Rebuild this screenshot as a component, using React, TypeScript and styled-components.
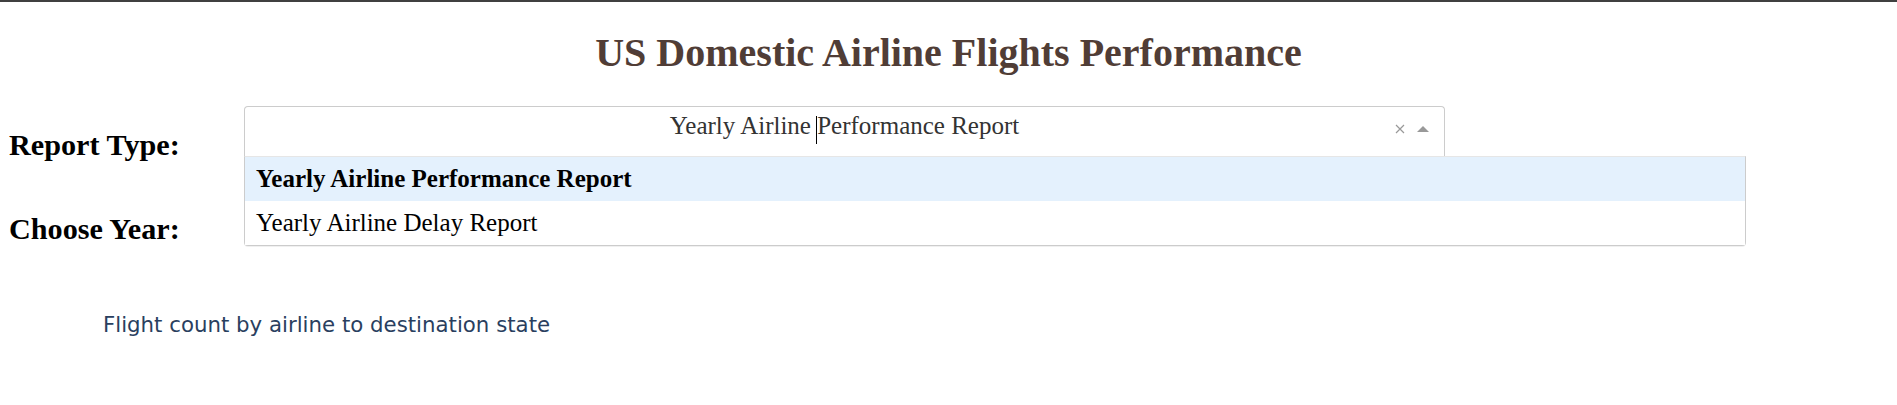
import styled, { createGlobalStyle } from "styled-components";

const GlobalStyle = createGlobalStyle`
    html {
        border-top: 2px solid #404040;
        background: #ffffff;
    }
    body {
        margin: 8px;
        font-family: "Liberation Serif", "Times New Roman", serif;
        color: #000000;
    }
`;

const Page = styled.div`
    display: flex;
    flex-direction: column;
`;

const Title = styled.h1`
    margin: 19px 0 26px;
    text-align: center;
    color: #503d36;
    font-size: 40px;
    line-height: 48px;
    font-weight: 700;
`;

const Row = styled.div`
    display: flex;
    align-items: flex-start;
`;

const Label = styled.h2`
    flex: 0 0 175px;
    margin: 24px 58px 24px 1px;
    font-size: 30.2px;
    line-height: 36px;
    font-weight: 700;
`;

const DropdownWrap = styled.div<{ $raised?: boolean }>`
    position: relative;
    width: 1201px;
    padding: 3px 3px 3px 2px;
    z-index: ${(p) => (p.$raised ? 2 : 1)};
`;

const Control = styled.div`
    position: relative;
    display: flex;
    height: 51px;
    box-sizing: border-box;
    border: 1px solid #cccccc;
    border-radius: 4px 4px 0 0;
    border-bottom-color: #e6e6e6;
    background: #ffffff;
    font-size: 25px;
`;

const ValueArea = styled.div`
    flex: 1;
    padding-left: 52px;
    line-height: 38px;
    text-align: center;
    color: #333333;
    white-space: nowrap;
`;

const Cursor = styled.span`
    position: absolute;
    left: 571px;
    top: 9px;
    width: 1px;
    height: 28px;
    background: #000000;
`;

const Indicators = styled.div`
    flex: 0 0 52px;
    box-sizing: border-box;
    display: flex;
    align-items: center;
    height: 43px;
    padding-left: 3px;
    gap: 12px;
`;

const Clear = styled.span`
    display: flex;
    color: #999999;
`;

const Arrow = styled.span`
    width: 0;
    height: 0;
    border-style: solid;
    border-width: 0 6px 6px;
    border-color: transparent transparent #999999;
`;

const Menu = styled.div`
    position: absolute;
    left: 2px;
    top: 53px;
    width: 1502px;
    box-sizing: border-box;
    border: 1px solid #cccccc;
    border-top-color: #e6e6e6;
    border-radius: 0 0 4px 4px;
    background: #ffffff;
    box-shadow: 0 1px 0 rgba(0, 0, 0, 0.06);
    font-size: 25px;
`;

const Option = styled.div<{ $focused?: boolean; $selected?: boolean }>`
    height: 44px;
    line-height: 44px;
    padding: 0 11px;
    color: #000000;
    background: ${(p) => (p.$focused ? "#e4f1fd" : "#ffffff")};
    font-weight: ${(p) => (p.$selected ? 700 : 400)};
    white-space: nowrap;
`;

const GraphTitle = styled.div`
    margin: 40px 0 0 95px;
    font-family: "DejaVu Sans", Verdana, sans-serif;
    font-size: 21.3px;
    line-height: 28px;
    color: #2a3f5f;
`;

const ClearIcon = () => (
    <svg width="10" height="10" viewBox="0 0 10 10">
        <path d="M1 1L9 9M9 1L1 9" stroke="currentColor" strokeWidth="1.2" />
    </svg>
);

const reportOptions = [
    "Yearly Airline Performance Report",
    "Yearly Airline Delay Report",
];

const App = () => {
    return (
        <Page>
            <GlobalStyle />
            <Title>US Domestic Airline Flights Performance</Title>
            <Row>
                <Label>Report Type:</Label>
                <DropdownWrap $raised>
                    <Control>
                        <ValueArea>Yearly Airline Performance Report</ValueArea>
                        <Cursor />
                        <Indicators>
                            <Clear>
                                <ClearIcon />
                            </Clear>
                            <Arrow />
                        </Indicators>
                    </Control>
                    <Menu>
                        {reportOptions.map((o, i) => (
                            <Option key={o} $focused={i === 0} $selected={i === 0}>
                                {o}
                            </Option>
                        ))}
                    </Menu>
                </DropdownWrap>
            </Row>
            <Row>
                <Label>Choose Year:</Label>
            </Row>
            <GraphTitle>Flight count by airline to destination state</GraphTitle>
        </Page>
    );
};

export default App;
